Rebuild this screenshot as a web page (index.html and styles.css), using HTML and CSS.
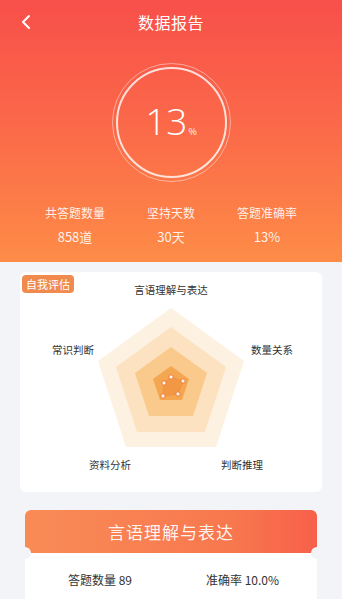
FILE: index.html
```html
<!DOCTYPE html>
<html lang="zh-CN">
<head>
    <meta charset="UTF-8">
    <title>数据报告</title>
    <link rel="stylesheet" href="styles.css">
</head>
<body>
<header class="hero">
    <div class="topbar">
        <svg class="back" width="10" height="16" viewBox="0 0 10 16">
            <path d="M8 2 L2 8 L8 14" fill="none" stroke="#fff" stroke-width="2" stroke-linecap="round" stroke-linejoin="round"/>
        </svg>
        <h1>数据报告</h1>
    </div>
    <div class="ring">
        <div class="ring-inner">
            <span class="score">13</span><span class="pct">%</span>
        </div>
    </div>
    <div class="stats">
        <div class="stat"><span class="label">共答题数量</span><span class="value">858道</span></div>
        <div class="stat"><span class="label">坚持天数</span><span class="value">30天</span></div>
        <div class="stat"><span class="label">答题准确率</span><span class="value">13%</span></div>
    </div>
</header>

<!-- RADAR -->
<section class="card radar-card">
    <span class="tag">自我评估</span>
    <svg class="radar" width="302" height="220" viewBox="0 0 302 220">
        <polygon fill="#fdf1e2" points="151,36 224,89 196,175 106,175 78,89"/>
        <polygon fill="#fce2c0" points="151,55 206,95 185,160 117,160 96,95"/>
        <polygon fill="#fac98c" points="151,75 187,101 173,144 129,144 115,101"/>
        <polygon fill="#f5a650" points="151,94 169,107 162,128 140,128 133,107"/>
        <polygon fill="#f29845" stroke="#f08a3c" stroke-width="0.6" points="151,105 163,109 158,122 143,124 144,111"/>
        <g fill="#fff4ea" stroke="#ec7a3a" stroke-width="1">
            <circle cx="151" cy="105" r="2.2"/>
            <circle cx="163" cy="109" r="2.2"/>
            <circle cx="158" cy="122" r="2.2"/>
            <circle cx="143" cy="124" r="2.2"/>
            <circle cx="144" cy="111" r="2.2"/>
        </g>
        <g class="axis-label" text-anchor="middle">
            <text x="151" y="22">言语理解与表达</text>
            <text x="53" y="82">常识判断</text>
            <text x="252" y="82">数量关系</text>
            <text x="90" y="197">资料分析</text>
            <text x="222" y="197">判断推理</text>
        </g>
    </svg>
</section>

<!-- SUBJECT -->
<section class="subject">
    <div class="subject-head">言语理解与表达</div>
    <div class="subject-body">
        <span>答题数量 89</span>
        <span>准确率 10.0%</span>
    </div>
</section>
</body>
</html>
```

FILE: styles.css
```css
html {
    box-sizing: border-box;
}

*, *:before, *:after {
    box-sizing: inherit;
}

body {
    margin: 0;
    width: 342px;
    height: 599px;
    overflow: hidden;
    background: #f3f4f8;
    font-family: "Noto Sans CJK SC", "Noto Sans", sans-serif;
    color: #333;
}

.hero {
    height: 262px;
    background: linear-gradient(180deg, #f84f4a 0%, #fb6a49 50%, #fe8c47 100%);
    color: #fff;
}

.topbar {
    position: relative;
    height: 44px;
    display: flex;
    align-items: center;
    justify-content: center;
}

.topbar .back {
    position: absolute;
    left: 21px;
    top: 14px;
}

.topbar h1 {
    margin: 0;
    font-size: 16px;
    font-weight: 400;
    letter-spacing: 0.5px;
}

.ring {
    width: 119px;
    height: 119px;
    margin: 19px auto 0;
    border-radius: 50%;
    border: 1px solid rgba(255, 255, 255, 0.45);
    padding: 3px;
}

.ring-inner {
    width: 100%;
    height: 100%;
    border-radius: 50%;
    border: 2px solid rgba(255, 255, 255, 0.8);
    display: flex;
    align-items: baseline;
    justify-content: center;
    padding-top: 28px;
}

.score {
    font-family: "Open Sans", sans-serif;
    font-size: 37px;
    font-weight: 300;
    line-height: 48px;
}

.pct {
    font-size: 9px;
    margin-left: 1px;
}

.stats {
    display: flex;
    justify-content: center;
    margin-top: 22px;
}

.stat {
    width: 96px;
    display: flex;
    flex-direction: column;
    align-items: center;
    gap: 6px;
    color: rgba(255, 255, 255, 0.9);
}

.stat .label {
    font-size: 12px;
    line-height: 18px;
}

.stat .value {
    font-size: 13px;
    line-height: 18px;
}

.card {
    position: relative;
    margin: 10px 20px 0;
    height: 220px;
    background: #fff;
    border-radius: 6px;
}

.tag {
    position: absolute;
    left: 2px;
    top: 3px;
    padding: 0 4px;
    height: 18px;
    line-height: 18px;
    font-size: 11px;
    color: #fff;
    background: #f08a4e;
    border-radius: 4px;
}

.radar {
    display: block;
}

.axis-label {
    font-size: 10.5px;
    fill: #333;
}

.subject {
    margin: 18px 25px 0;
}

.subject-head {
    position: relative;
    height: 43px;
    line-height: 43px;
    text-align: center;
    font-size: 17px;
    letter-spacing: 1px;
    color: rgba(255, 255, 255, 0.92);
    background: linear-gradient(90deg, #f98b57 0%, #f8784e 70%, #f7604a 100%);
    border-radius: 6px 6px 0 0;
}

.subject-head:before,
.subject-head:after {
    content: "";
    position: absolute;
    bottom: -6px;
    width: 12px;
    height: 12px;
    border-radius: 50%;
    background: #f3f4f8;
}

.subject-head:before {
    left: -6px;
}

.subject-head:after {
    right: -6px;
}

.subject-body {
    height: 60px;
    background: #fff;
    display: flex;
    justify-content: space-between;
    padding: 18px 38px 0 43px;
    font-size: 12px;
    color: #333;
}
```
